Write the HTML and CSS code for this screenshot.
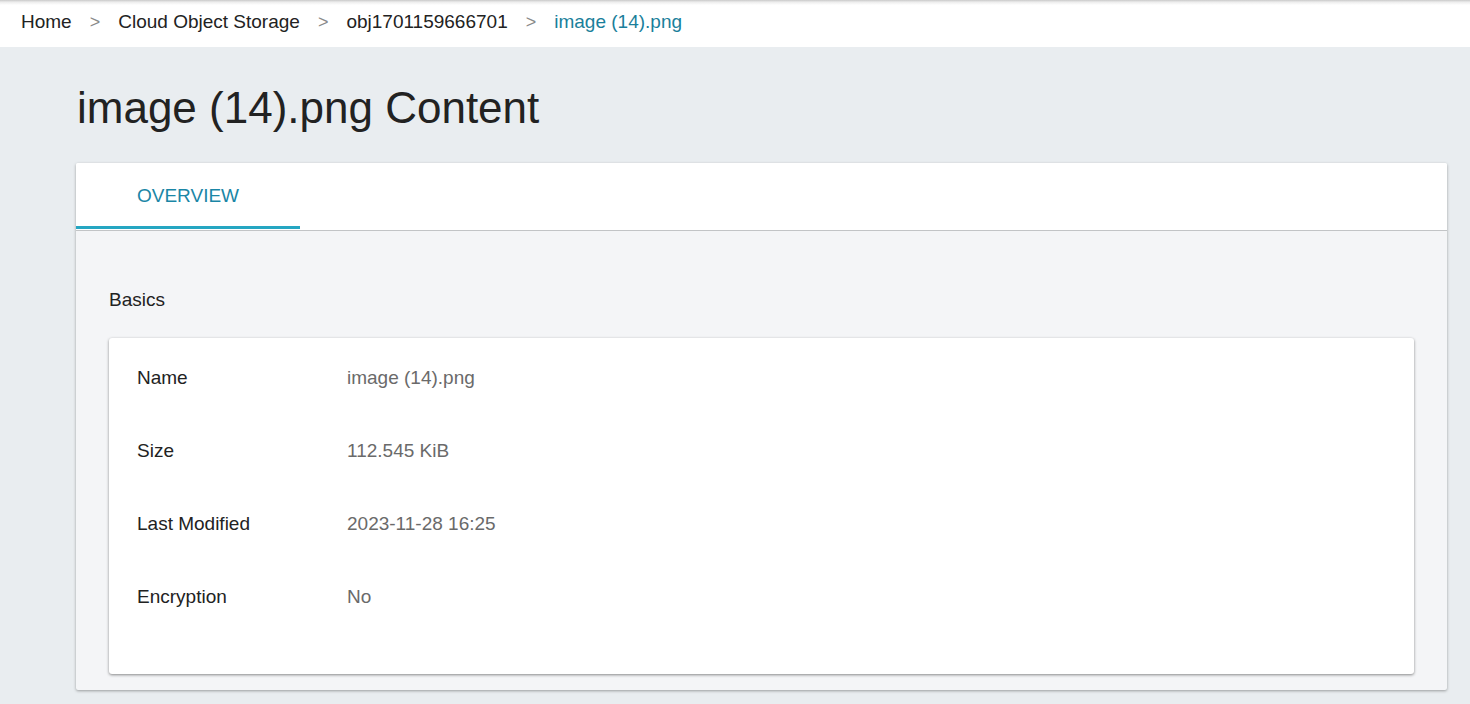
FILE: index.html
```html
<!DOCTYPE html>
<html lang="en">
<head>
    <meta charset="UTF-8">
    <title>image (14).png Content</title>
    <link rel="stylesheet" href="styles.css">
</head>
<body>

    <!-- Breadcrumbs -->
    <div class="crumbs">
        <span class="crumb">Home</span>
        <span class="sep">&gt;</span>
        <span class="crumb">Cloud Object Storage</span>
        <span class="sep">&gt;</span>
        <span class="crumb">obj1701159666701</span>
        <span class="sep">&gt;</span>
        <span class="crumb current">image (14).png</span>
    </div>

    <div class="page">
        <h1>image (14).png Content</h1>

        <div class="card">
            <div class="tabs">
                <div class="tab active">OVERVIEW</div>
            </div>

            <div class="tab-body">
                <div class="section-title">Basics</div>

                <div class="details">
                    <div class="row">
                        <div class="label">Name</div>
                        <div class="value">image (14).png</div>
                    </div>
                    <div class="row">
                        <div class="label">Size</div>
                        <div class="value">112.545 KiB</div>
                    </div>
                    <div class="row">
                        <div class="label">Last Modified</div>
                        <div class="value">2023-11-28 16:25</div>
                    </div>
                    <div class="row">
                        <div class="label">Encryption</div>
                        <div class="value">No</div>
                    </div>
                </div>
            </div>
        </div>
    </div>

</body>
</html>
```

FILE: styles.css
```css
body {
    margin: 0;
    font-family: 'Liberation Sans', Arial, sans-serif;
    font-size: 19px;
    color: #222;
    background: #e9edf0;
}

/* Breadcrumbs */
.crumbs {
    height: 47px;
    display: flex;
    align-items: center;
    padding: 0 0 3px 21px;
    box-sizing: border-box;
    background: linear-gradient(to bottom, #c9c9c9 0, #ececec 2px, #fff 5px);
}

.sep {
    color: #8a8a8a;
    margin: 0 18px;
    font-size: 18px;
}

.current {
    color: #1a7f9b;
}

.page {
    padding: 0 23px 20px 76px;
}

h1 {
    font-size: 44px;
    font-weight: normal;
    line-height: 52px;
    margin: 35px 0 29px 1px;
    color: #222;
}

.card {
    background: #f4f5f7;
    border-radius: 2px;
    box-shadow: 0 1px 3px rgba(0, 0, 0, 0.35);
}

.tabs {
    background: #fff;
    height: 67px;
    border-bottom: 1px solid #c2c4c6;
    display: flex;
    border-radius: 2px 2px 0 0;
}

.tab {
    width: 224px;
    display: flex;
    align-items: center;
    justify-content: center;
    color: #1a86a6;
    box-sizing: border-box;
    padding-top: 3px;
}

.tab.active {
    border-bottom: 3px solid #25a6c2;
    height: 66px;
}

.tab-body {
    padding: 58px 33px 16px 33px;
}

.section-title {
    line-height: 22px;
    margin-bottom: 27px;
}

.details {
    background: #fff;
    border-radius: 3px;
    box-shadow: 0 1px 3px rgba(0, 0, 0, 0.45);
    padding: 3px 28px 41px 28px;
}

.row {
    display: flex;
    align-items: center;
    height: 73px;
}

.label {
    width: 210px;
}

.value {
    color: #6a6a6a;
}
```
